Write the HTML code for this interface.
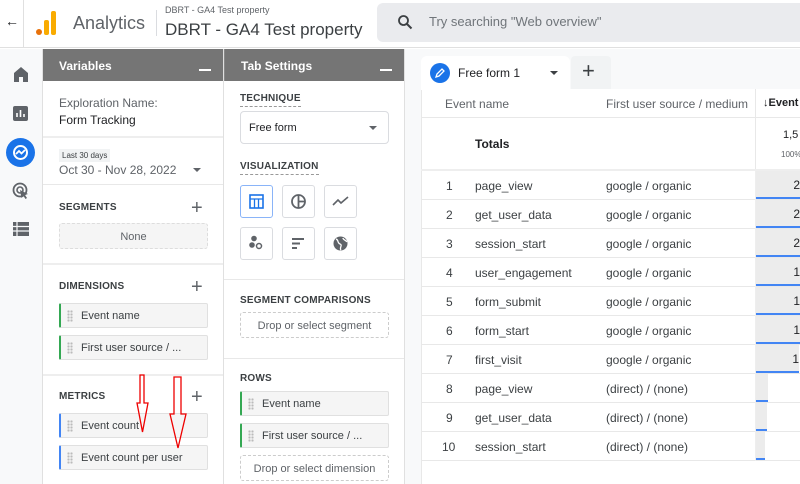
<!DOCTYPE html>
<html><head><meta charset="utf-8"><style>
*{box-sizing:border-box;margin:0;padding:0}
body{width:800px;height:484px;overflow:hidden;background:#fff;font-family:"Liberation Sans",Arial,sans-serif;position:relative;color:#202124}
.a{position:absolute}
.hdr{background:#757575;color:#fff;font-weight:bold;font-size:12px;height:32px;top:49px;padding:10px 16px}
.min{position:absolute;right:12px;top:20px;width:12px;height:2px;background:#fff}
.lbl{font-size:10px;color:#3c4043;font-weight:bold;letter-spacing:.2px}
.chip{position:absolute;height:25px;background:#f5f5f5;border:1px solid #e0e0e0;border-radius:2px;font-size:11px;color:#3c4043;padding:6px 0 0 20px}
.chip.g{border-left:2px solid #34a853}.chip.b{border-left:2px solid #4285f4}
.chip:before{content:"";position:absolute;left:6px;top:6px;width:6px;height:12px;background:radial-gradient(circle,#bbb 1px,transparent 1.3px) 0 0/3px 3px}
.drop{position:absolute;border:1px dashed #ccc;border-radius:3px;font-size:11px;color:#5f6368;text-align:center;height:26px;padding-top:7px}
.plus{position:absolute;font-size:20px;color:#5f6368;font-weight:300;line-height:16px}
.ic{position:absolute;width:33px;height:33px;border:1px solid #dadce0;border-radius:3px}
.row{position:absolute;left:421px;width:379px;height:29px;border-bottom:1px solid #e8e8e8;font-size:12px;color:#3c4043}
.row span{position:absolute;top:8px}
.bar{position:absolute;left:756px;height:28px;background:#ececec;border-bottom:2px solid #4285f4;font-size:12px;text-align:right;padding:7px 0 0}
</style></head><body>
<div class="a" style="left:0;top:0;width:800px;height:48px;border-bottom:1px solid #e0e0e0"></div>
<div class="a" style="left:5px;top:13px;font-size:14px;color:#202124">←</div>
<div class="a" style="left:23px;top:0;width:1px;height:48px;background:#e0e0e0"></div>
<div class="a" style="left:36px;top:29px;width:6px;height:6px;border-radius:3px;background:#e8710a"></div>
<div class="a" style="left:44px;top:20px;width:5px;height:15px;border-radius:2px;background:#f9ab00"></div>
<div class="a" style="left:51px;top:11px;width:5px;height:24px;border-radius:2px;background:#f9ab00"></div>
<div class="a" style="left:73px;top:13px;font-size:18px;color:#5f6368">Analytics</div>
<div class="a" style="left:156px;top:10px;width:1px;height:26px;background:#dadce0"></div>
<div class="a" style="left:165px;top:5px;font-size:9px;color:#5f6368">DBRT - GA4 Test property</div>
<div class="a" style="left:165px;top:20px;font-size:17px;color:#3c4043">DBRT - GA4 Test property</div>
<div class="a" style="left:377px;top:3px;width:430px;height:39px;background:#eaebee;border-radius:6px"></div>
<svg class="a" style="left:397px;top:14px" width="16" height="16" viewBox="0 0 16 16"><circle cx="6.5" cy="6.5" r="4.5" fill="none" stroke="#3c4043" stroke-width="1.8"/><path d="M10 10l4.5 4.5" stroke="#3c4043" stroke-width="2"/></svg>
<div class="a" style="left:429px;top:14px;font-size:13px;color:#70757a">Try searching "Web overview"</div>
<div class="a" style="left:0;top:49px;width:43px;height:435px;background:#f8f9fa;border-right:1px solid #e0e0e0"></div>
<svg class="a" style="left:12px;top:66px" width="18" height="16" viewBox="0 0 18 16"><path d="M2 7L9 1l7 6v9h-5v-5H7v5H2z" fill="#5f6368"/></svg>
<svg class="a" style="left:13px;top:106px" width="15" height="15"><rect width="15" height="15" rx="2" fill="#5f6368"/><path d="M4 11V7M7.5 11V4M11 11V8" stroke="#fff" stroke-width="1.6"/></svg>
<div class="a" style="left:6px;top:138px;width:29px;height:29px;border-radius:50%;background:#1a73e8"></div>
<svg class="a" style="left:12px;top:144px" width="17" height="17" viewBox="0 0 17 17"><circle cx="8.5" cy="8.5" r="6.5" fill="none" stroke="#fff" stroke-width="2"/><path d="M4 10l3-3 2.5 2.5L13 6" fill="none" stroke="#fff" stroke-width="1.8"/></svg>
<svg class="a" style="left:12px;top:182px" width="18" height="18" viewBox="0 0 18 18"><circle cx="8" cy="8" r="6.5" fill="none" stroke="#5f6368" stroke-width="1.8"/><circle cx="8" cy="8" r="3" fill="none" stroke="#5f6368" stroke-width="1.6"/><path d="M8 8l8 4-3 1 2 3-1.5 1-2-3-2 2z" fill="#5f6368"/></svg>
<svg class="a" style="left:13px;top:222px" width="16" height="14"><rect width="16" height="14" fill="#5f6368"/><path d="M0 4.5h16M0 9h16M4 0v14" stroke="#f8f9fa" stroke-width="1.2"/></svg>
<div class="a hdr" style="left:43px;width:180px">Variables<div class="min"></div></div>
<div class="a hdr" style="left:224px;width:180px;border-left:1px solid #888">Tab Settings<div class="min"></div></div>
<div class="a" style="left:223px;top:49px;width:1px;height:435px;background:#e0e0e0"></div>
<div class="a" style="left:404px;top:49px;width:1px;height:435px;background:#e0e0e0"></div>
<div class="a" style="left:59px;top:96px;font-size:12px;color:#5f6368">Exploration Name:</div>
<div class="a" style="left:59px;top:113px;font-size:12px;color:#202124">Form Tracking</div>
<div class="a" style="left:43px;top:136px;width:180px;height:2px;background:#eee"></div>
<div class="a" style="left:59px;top:149px;font-size:8px;background:#f1f3f4;padding:2px 3px;color:#3c4043">Last 30 days</div>
<div class="a" style="left:59px;top:163px;font-size:12px;color:#5f6368">Oct 30 - Nov 28, 2022</div>
<div class="a" style="left:193px;top:168px;border:4px solid transparent;border-top:4px solid #5f6368"></div>
<div class="a" style="left:43px;top:184px;width:180px;height:1px;background:#e8e8e8"></div>
<div class="a lbl" style="left:59px;top:202px">SEGMENTS</div><div class="plus" style="left:191px;top:200px">+</div>
<div class="drop" style="left:59px;top:223px;width:149px;background:#f5f5f5;border-color:#ddd;font-size:11px">None</div>
<div class="a" style="left:43px;top:263px;width:180px;height:2px;background:#eee"></div>
<div class="a lbl" style="left:59px;top:281px">DIMENSIONS</div><div class="plus" style="left:191px;top:279px">+</div>
<div class="chip g" style="left:59px;top:303px;width:149px">Event name</div>
<div class="chip g" style="left:59px;top:335px;width:149px">First user source / ...</div>
<div class="a" style="left:43px;top:374px;width:180px;height:2px;background:#eee"></div>
<div class="a lbl" style="left:59px;top:391px">METRICS</div><div class="plus" style="left:191px;top:389px">+</div>
<div class="chip b" style="left:59px;top:413px;width:149px">Event count</div>
<div class="chip b" style="left:59px;top:445px;width:149px">Event count per user</div>
<svg class="a" style="left:135px;top:374px" width="60" height="80"><path d="M5 1h4v28h4L7.5 58 2 29h3z" fill="none" stroke="#e00" stroke-width="1.3"/><path d="M39 3h7v37h5l-8 34-8-34h4z" fill="none" stroke="#e00" stroke-width="1.3"/></svg>
<div class="a lbl" style="left:240px;top:93px;border-bottom:1px dashed #999;padding-bottom:2px">TECHNIQUE</div>
<div class="a" style="left:240px;top:111px;width:149px;height:33px;border:1px solid #dadce0;border-radius:4px;font-size:11px;padding:10px 8px">Free form</div>
<div class="a" style="left:369px;top:126px;border:4px solid transparent;border-top:4px solid #5f6368"></div>
<div class="a lbl" style="left:240px;top:161px;border-bottom:1px dashed #999;padding-bottom:2px">VISUALIZATION</div>
<div class="ic" style="left:240px;top:185px;border-color:#8ab4f8"></div>
<svg class="a" style="left:249px;top:194px" width="15" height="15"><rect x="1" y="1" width="13" height="13" fill="none" stroke="#1a73e8" stroke-width="1.6"/><path d="M1 5h13M5.5 5v9M9.5 5v9" stroke="#1a73e8" stroke-width="1.3"/></svg>
<div class="ic" style="left:282px;top:185px"></div>
<svg class="a" style="left:290px;top:193px" width="17" height="17"><circle cx="8.5" cy="8.5" r="6.5" fill="none" stroke="#5f6368" stroke-width="1.8"/><path d="M8.5 2v13M8.5 8.5h6.5" stroke="#5f6368" stroke-width="1.8"/></svg>
<div class="ic" style="left:324px;top:185px"></div>
<svg class="a" style="left:332px;top:195px" width="17" height="12"><path d="M1 10l5-5 3 3 7-6" fill="none" stroke="#5f6368" stroke-width="1.6"/></svg>
<div class="ic" style="left:240px;top:227px"></div>
<svg class="a" style="left:248px;top:234px" width="17" height="17"><circle cx="6" cy="4.5" r="2.8" fill="#5f6368"/><circle cx="4" cy="11" r="2.8" fill="#5f6368"/><circle cx="11" cy="12" r="2.5" fill="none" stroke="#5f6368" stroke-width="1.5"/></svg>
<div class="ic" style="left:282px;top:227px"></div>
<svg class="a" style="left:292px;top:237px" width="14" height="13"><path d="M0 2h12M0 6.5h8M0 11h5" stroke="#5f6368" stroke-width="2"/></svg>
<div class="ic" style="left:324px;top:227px"></div>
<svg class="a" style="left:332px;top:235px" width="17" height="17"><circle cx="8.5" cy="8.5" r="7" fill="#5f6368"/><path d="M4 4c3 1 1 4 4 5s-1 4 1 6M11 3c0 2 3 2 4 4" fill="none" stroke="#fff" stroke-width="1.3"/></svg>
<div class="a" style="left:224px;top:279px;width:180px;height:1px;background:#e8e8e8"></div>
<div class="a lbl" style="left:240px;top:295px">SEGMENT COMPARISONS</div>
<div class="drop" style="left:240px;top:312px;width:149px">Drop or select segment</div>
<div class="a" style="left:224px;top:358px;width:180px;height:1px;background:#e8e8e8"></div>
<div class="a lbl" style="left:240px;top:373px">ROWS</div>
<div class="chip g" style="left:240px;top:391px;width:149px">Event name</div>
<div class="chip g" style="left:240px;top:423px;width:149px">First user source / ...</div>
<div class="drop" style="left:240px;top:455px;width:149px">Drop or select dimension</div>
<div class="a" style="left:405px;top:49px;width:395px;height:435px;background:#f8f9fa"></div>
<div class="a" style="left:421px;top:89px;width:379px;height:395px;background:#fff;border-left:1px solid #e8e8e8"></div>
<div class="a" style="left:421px;top:56px;width:149px;height:34px;background:#fff;border-radius:6px 6px 0 0"></div>
<div class="a" style="left:430px;top:63px;width:20px;height:20px;border-radius:50%;background:#1a73e8"></div>
<svg class="a" style="left:434px;top:67px" width="12" height="12"><path d="M2 10l1-3 5-5 2 2-5 5z" fill="none" stroke="#fff" stroke-width="1.3"/></svg>
<div class="a" style="left:458px;top:66px;font-size:12px;color:#202124">Free form 1</div>
<div class="a" style="left:550px;top:71px;border:4px solid transparent;border-top:4px solid #3c4043"></div>
<div class="a" style="left:571px;top:56px;width:40px;height:33px;background:#f1f3f4;border-radius:4px 4px 0 0"></div>
<div class="a" style="left:582px;top:58px;font-size:22px;color:#3c4043;font-weight:300">+</div>
<div class="row" style="top:89px"><span style="left:24px;color:#5f6368">Event name</span><span style="left:185px;color:#5f6368">First user source / medium</span></div>
<div class="a" style="left:755px;top:89px;width:1px;height:82px;background:#e8e8e8"></div>
<div class="a" style="left:763px;top:97px;font-size:11px;font-weight:bold">↓Event</div>
<div class="row" style="top:118px;height:53px;border-bottom:2px solid #eee"><span style="left:54px;top:19px;font-weight:bold;color:#202124">Totals</span></div>
<div class="a" style="left:783px;top:129px;font-size:11px">1,5</div>
<div class="a" style="left:781px;top:150px;font-size:8px;color:#5f6368">100%</div>
<div class="row" style="top:171px"><span style="left:25px">1</span><span style="left:54px">page_view</span><span style="left:185px">google / organic</span></div>
<div class="row" style="top:200px"><span style="left:25px">2</span><span style="left:54px">get_user_data</span><span style="left:185px">google / organic</span></div>
<div class="row" style="top:229px"><span style="left:25px">3</span><span style="left:54px">session_start</span><span style="left:185px">google / organic</span></div>
<div class="row" style="top:258px"><span style="left:25px">4</span><span style="left:54px">user_engagement</span><span style="left:185px">google / organic</span></div>
<div class="row" style="top:287px"><span style="left:25px">5</span><span style="left:54px">form_submit</span><span style="left:185px">google / organic</span></div>
<div class="row" style="top:316px"><span style="left:25px">6</span><span style="left:54px">form_start</span><span style="left:185px">google / organic</span></div>
<div class="row" style="top:345px"><span style="left:25px">7</span><span style="left:54px">first_visit</span><span style="left:185px">google / organic</span></div>
<div class="row" style="top:374px"><span style="left:25px">8</span><span style="left:54px">page_view</span><span style="left:185px">(direct) / (none)</span></div>
<div class="row" style="top:403px"><span style="left:25px">9</span><span style="left:54px">get_user_data</span><span style="left:185px">(direct) / (none)</span></div>
<div class="row" style="top:432px"><span style="left:21px">10</span><span style="left:54px">session_start</span><span style="left:185px">(direct) / (none)</span></div>
<div class="a" style="left:755px;top:171px;width:1px;height:290px;background:#eee"></div>
<div class="bar" style="top:171px;width:44px">2</div>
<div class="bar" style="top:200px;width:44px">2</div>
<div class="bar" style="top:229px;width:44px">2</div>
<div class="bar" style="top:258px;width:44px">1</div>
<div class="bar" style="top:287px;width:44px">1</div>
<div class="bar" style="top:316px;width:44px">1</div>
<div class="bar" style="top:345px;width:43px">1</div>
<div class="bar" style="top:374px;width:12px"></div>
<div class="bar" style="top:403px;width:11px"></div>
<div class="bar" style="top:432px;width:9px"></div>
<div class="a" style="left:756px;top:171px;width:44px;height:203px;background:transparent"></div>
</body></html>
